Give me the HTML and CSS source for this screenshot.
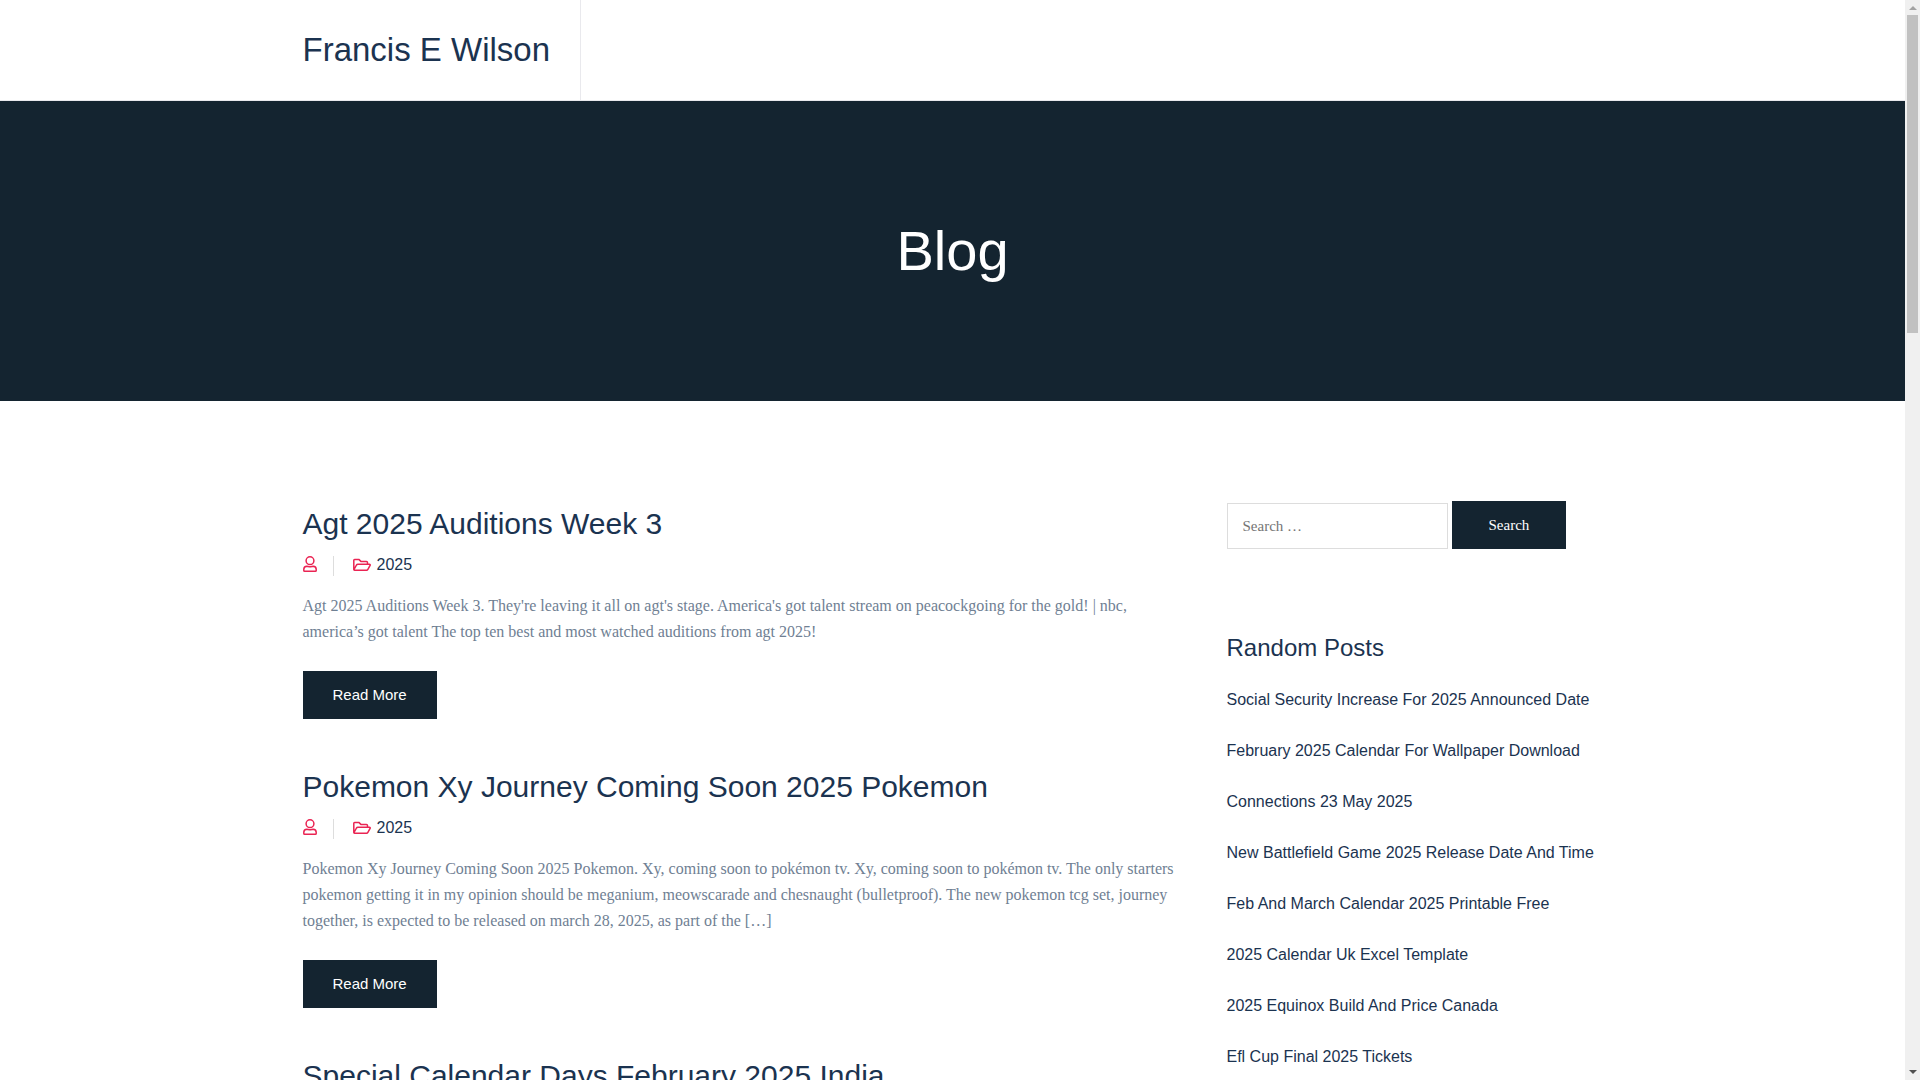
FILE: index.html
```html
<!DOCTYPE html>
<html lang="en">
<head>
    <meta charset="UTF-8">
    <meta name="viewport" content="width=device-width, initial-scale=1.0">
    <title>Blog - Francis E Wilson</title>
    <link rel="stylesheet" href="styles.css">
</head>
<body>
    <!-- shared icons -->
    <svg class="icon-defs" aria-hidden="true">
        <symbol id="icon-user" viewBox="0 0 14 16">
            <circle cx="7" cy="4.7" r="3.9"/>
            <path d="M3.8 10.2C2 10.3 .8 11.6 .8 13.2V14.4C.8 14.9 1.1 15.2 1.6 15.2H12.4C12.9 15.2 13.2 14.9 13.2 14.4V13.2C13.2 11.6 12 10.3 10.2 10.2C9.1 10.2 8.4 10.8 7 10.8S4.9 10.2 3.8 10.2Z"/>
        </symbol>
        <symbol id="icon-folder" viewBox="0 0 18 16">
            <path d="M.8 12.6V3.2C.8 2.7 1.1 2.4 1.6 2.4H5.8L7.9 4.4H13.4C14.1 4.4 14.5 4.8 14.5 5.4V7.2M.9 12.7L3.5 8C3.8 7.5 4.2 7.2 4.8 7.2H16.4C17.1 7.2 17.4 7.8 17.1 8.3L14.9 12.4C14.6 13 14.2 13.3 13.6 13.3H1.5C1 13.3 .8 13 .8 12.6"/>
        </symbol>
    </svg>

    <header class="site-header">
        <div class="container">
            <div class="site-branding">
                <a class="site-title" href="#">Francis E Wilson</a>
            </div>
        </div>
    </header>

    <section class="page-banner">
        <h1>Blog</h1>
    </section>

    <div class="container content">
        <main class="posts">
            <article class="post">
                <h2><a href="#">Agt 2025 Auditions Week 3</a></h2>
                <div class="post-meta">
                    <a class="author" href="#" aria-label="Author"><svg class="icon icon-user"><use href="#icon-user"/></svg></a>
                    <a class="category" href="#"><svg class="icon icon-folder"><use href="#icon-folder"/></svg>2025</a>
                </div>
                <p>Agt 2025 Auditions Week 3. They're leaving it all on agt's stage. America's got talent stream on peacockgoing for the gold! | nbc, america’s got talent The top ten best and most watched auditions from agt 2025!</p>
                <a class="btn" href="#">Read More</a>
            </article>

            <article class="post">
                <h2><a href="#">Pokemon Xy Journey Coming Soon 2025 Pokemon</a></h2>
                <div class="post-meta">
                    <a class="author" href="#" aria-label="Author"><svg class="icon icon-user"><use href="#icon-user"/></svg></a>
                    <a class="category" href="#"><svg class="icon icon-folder"><use href="#icon-folder"/></svg>2025</a>
                </div>
                <p>Pokemon Xy Journey Coming Soon 2025 Pokemon. Xy, coming soon to pokémon tv. Xy, coming soon to pokémon tv. The only starters pokemon getting it in my opinion should be meganium, meowscarade and chesnaught (bulletproof). The new pokemon tcg set, journey together, is expected to be released on march 28, 2025, as part of the […]</p>
                <a class="btn" href="#">Read More</a>
            </article>

            <article class="post">
                <h2><a href="#">Special Calendar Days February 2025 India</a></h2>
            </article>
        </main>

        <aside class="sidebar">
            <form class="search-form" role="search">
                <input type="search" placeholder="Search …" aria-label="Search for">
                <button class="btn" type="submit">Search</button>
            </form>

            <section class="widget">
                <h3>Random Posts</h3>
                <ul>
                    <li><a href="#">Social Security Increase For 2025 Announced Date</a></li>
                    <li><a href="#">February 2025 Calendar For Wallpaper Download</a></li>
                    <li><a href="#">Connections 23 May 2025</a></li>
                    <li><a href="#">New Battlefield Game 2025 Release Date And Time</a></li>
                    <li><a href="#">Feb And March Calendar 2025 Printable Free</a></li>
                    <li><a href="#">2025 Calendar Uk Excel Template</a></li>
                    <li><a href="#">2025 Equinox Build And Price Canada</a></li>
                    <li><a href="#">Efl Cup Final 2025 Tickets</a></li>
                </ul>
            </section>
        </aside>
    </div>

    <div class="scrollbar" aria-hidden="true">
        <span class="arrow arrow-up"></span>
        <span class="thumb"></span>
        <span class="arrow arrow-down"></span>
    </div>
</body>
</html>
```

FILE: styles.css
```css
* {
    box-sizing: border-box;
}

body {
    margin: 0;
    padding-right: 15px;
    height: 100vh;
    overflow: hidden;
    background: #ffffff;
    color: #6f8093;
    font-family: "Liberation Serif", "Times New Roman", serif;
    font-size: 16px;
    line-height: 26px;
}

a {
    color: #1b3350;
    text-decoration: none;
}

h1, h2, h3 {
    margin: 0;
    color: #1b3350;
    font-weight: 400;
}

h1, h2, h3, .site-title, .post-meta, .post .btn, .widget {
    font-family: "Liberation Sans", Arial, sans-serif;
}

.container {
    max-width: 1330px;
    margin: 0 auto;
    padding: 0 15px;
}

/* header */
.site-header {
    border-bottom: 1px solid #e9e9ed;
}

.site-header .container {
    display: flex;
}

.site-branding {
    display: flex;
    align-items: center;
    height: 100px;
    padding-right: 30px;
    border-right: 1px solid #e9e9ed;
}

.site-title {
    font-size: 33px;
    line-height: 50px;
}

.page-banner {
    display: flex;
    align-items: center;
    justify-content: center;
    height: 300px;
    background: #142430;
}

.page-banner h1 {
    color: #ffffff;
    font-size: 56px;
    line-height: 64px;
}

/* content */
.content {
    display: grid;
    grid-template-columns: 1fr 376px;
    gap: 50px;
    padding-top: 100px;
}

.post {
    margin-bottom: 45px;
}

.post h2 {
    font-size: 30px;
    line-height: 45px;
}

.post-meta {
    display: flex;
    align-items: flex-end;
    margin: 6px 0 15px;
}

.post-meta a {
    display: flex;
    align-items: center;
}

.post-meta .author {
    align-items: flex-start;
    height: 20px;
    padding-right: 16px;
    margin: 0 19px 2px 0;
    border-right: 1px solid #dddddd;
}

.post-meta .category {
    gap: 6px;
}

.post p {
    margin: 0 0 26px;
}

.icon-defs {
    position: absolute;
    width: 0;
    height: 0;
}

.icon {
    height: 16px;
    fill: none;
    stroke: #ea2453;
    stroke-width: 1.5;
    stroke-linejoin: round;
}

.icon-user {
    width: 14px;
}

.icon-folder {
    width: 18px;
}

.btn {
    display: inline-block;
    padding: 11px 30px;
    border: 0;
    background: #142430;
    color: #ffffff;
    font-size: 15px;
    line-height: 26px;
    vertical-align: top;
    cursor: pointer;
}

.btn:hover {
    background: #ea2453;
}

/* sidebar */
.search-form {
    display: flex;
    align-items: flex-end;
    gap: 4px;
    margin-bottom: 81px;
}

.search-form input {
    width: 221px;
    height: 46px;
    padding: 0 15px;
    border: 1px solid #dddddd;
    background: #ffffff;
    font-family: inherit;
    font-size: 15px;
    appearance: none;
}

.search-form .btn {
    padding: 11px 37px;
    font-family: inherit;
}

.widget h3 {
    margin-bottom: 21px;
    font-size: 24px;
    line-height: 36px;
}

.widget ul {
    margin: 0;
    padding: 0;
    list-style: none;
}

.widget li {
    margin-bottom: 25px;
}

/* scrollbar */
.scrollbar {
    position: fixed;
    top: 0;
    right: 0;
    bottom: 0;
    display: flex;
    flex-direction: column;
    align-items: center;
    width: 15px;
    padding: 6px 0;
    background: #f0f0f0;
}

.arrow {
    border: 4px solid transparent;
}

.arrow-up {
    border-top: 0;
    border-bottom-color: #a3a3a3;
}

.arrow-down {
    border-bottom: 0;
    border-top-color: #505050;
    margin-top: auto;
}

.thumb {
    width: 11px;
    height: 318px;
    margin-top: 5px;
    background: #c1c1c1;
}
```
